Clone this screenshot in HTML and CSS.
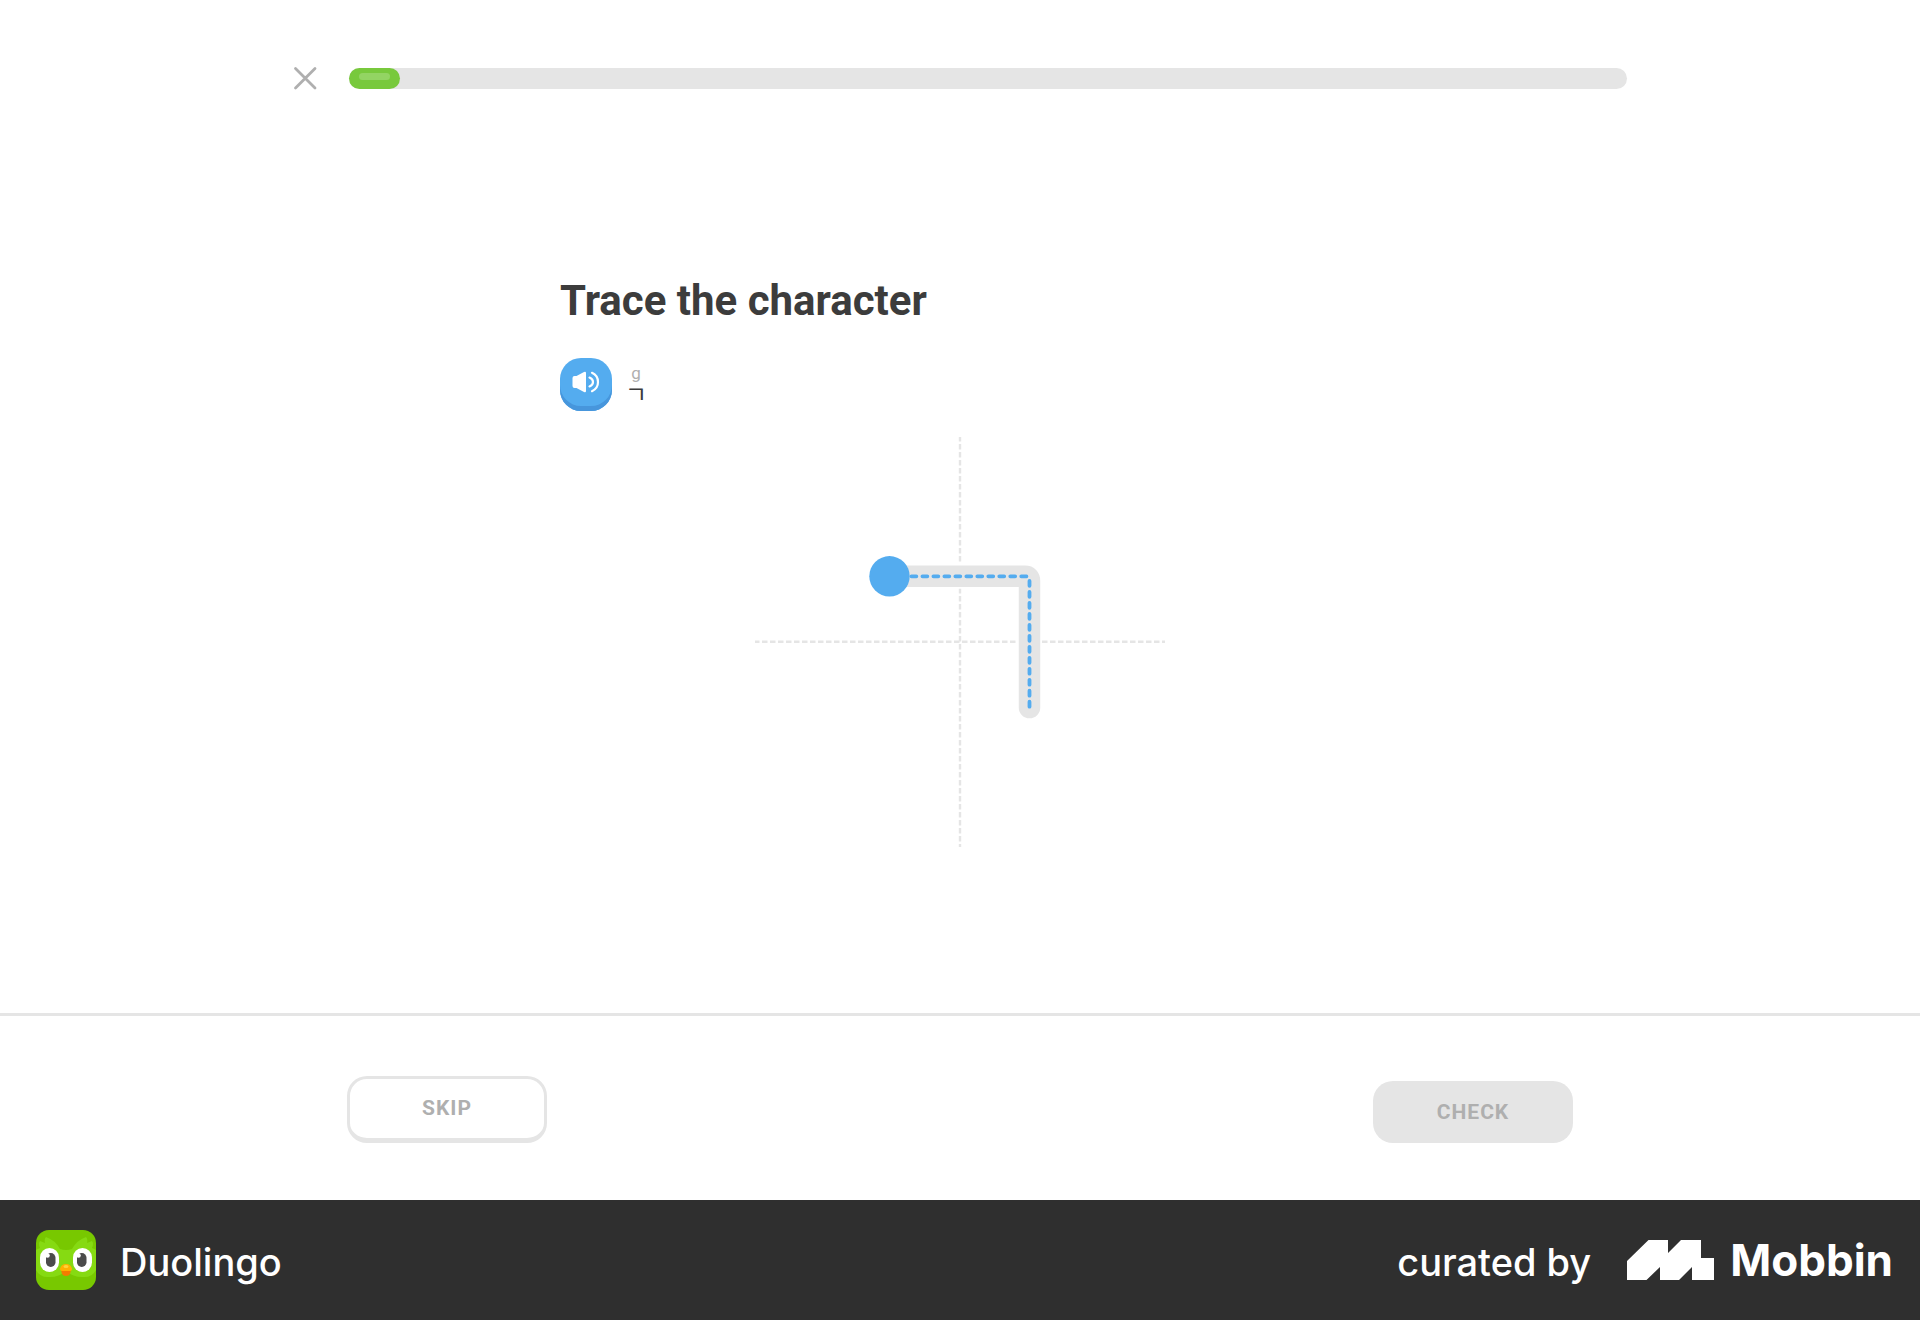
FILE: index.html
```html
<!DOCTYPE html>
<html lang="en">
<head>
<meta charset="utf-8">
<meta name="viewport" content="width=device-width, initial-scale=1">
<title>Trace the character</title>
<link rel="stylesheet" href="styles.css">
</head>
<body>
<header class="lesson-header">
  <button class="close" type="button" aria-label="Close">
    <svg viewBox="0 0 24 24" width="24" height="24" fill="none" stroke="#afafaf" stroke-width="2.8" stroke-linecap="round"><path d="M2.500 2.500 22 22M22 2.500 2.500 22"/></svg>
  </button>
  <div class="progress" role="progressbar" aria-label="Lesson progress" aria-valuemin="0" aria-valuemax="100" aria-valuenow="4">
    <div class="progress-fill" style="width:4%"><span class="progress-shine"></span></div>
  </div>
</header>

<main class="challenge">
  <h1 class="title">Trace the character</h1>
  <div class="prompt">
    <button class="speaker" type="button" aria-label="Play sound">
      <svg viewBox="0 0 28 24" width="28" height="24"><path fill="#fff" d="M2.500 6H4.500L12 2Q14 1.200 14 3V21Q14 22.800 12 22L4.500 18H2.500Q.5 18 .5 16V8Q.5 6 2.500 6Z"/><path fill="none" stroke="#fff" stroke-width="2.200" stroke-linecap="round" d="M17.500 7.600Q21 9 21 12T17.500 16.400M20 2.800Q26 5.600 26 12T20 21.200"/></svg>
    </button>
    <div class="hint">
      <span class="romaja">g</span>
      <span class="jamo" lang="ko">ㄱ</span>
    </div>
  </div>
  <svg class="trace" viewBox="0 0 410 410" width="410" height="410" fill="none" role="img" aria-label="Stroke to trace">
    <path d="M205 0V410M0 204.700H410" stroke="#e5e5e5" stroke-width="2.400" stroke-dasharray="5.500 2.500" stroke-dashoffset="1"/>
    <g stroke-linecap="round">
      <path d="M134.500 139.300H270Q274.500 139.300 274.500 144V270.600" stroke="#fff" stroke-width="25"/>
      <path d="M134.500 139.300H270Q274.500 139.300 274.500 144V270.600" stroke="#e5e5e5" stroke-width="21.500"/>
      <path d="M134.500 139.300H270Q274.500 139.300 274.500 144V270.600" stroke="#54acef" stroke-width="3.800" stroke-dasharray="4.900 6.080"/>
    </g>
    <circle cx="134.500" cy="139.300" r="20.200" fill="#54acef"/>
  </svg>
</main>

<footer class="actions">
  <div class="actions-inner">
    <button class="btn skip" type="button">SKIP</button>
    <button class="btn check" type="button" disabled>CHECK</button>
  </div>
</footer>

<div class="credit">
  <div class="app">
    <svg class="app-icon" viewBox="0 0 60 60" width="60" height="60" aria-hidden="true">
      <rect width="60" height="60" rx="13" fill="#78c800"/>
      <path fill="#86da12" d="M0 20 4 18Q2 13 4 11L9 13Q8 9 10 7Q19 10 24 19Q30 21 36 19Q41 10 50 7Q52 9 51 13L56 11Q58 13 56 18L60 20V40Q56 48 46 47Q37 47 30 41Q23 47 14 47Q4 48 0 40Z"/>
      <rect x="4" y="18" width="19" height="24" rx="9.500" fill="#fff"/>
      <rect x="37" y="18" width="19" height="24" rx="9.500" fill="#fff"/>
      <rect x="10" y="23" width="9.500" height="14" rx="4.700" fill="#4b4b4b"/>
      <rect x="41" y="23" width="9.500" height="14" rx="4.700" fill="#4b4b4b"/>
      <circle cx="11.500" cy="25.500" r="2.300" fill="#fff"/>
      <circle cx="42.500" cy="25.500" r="2.300" fill="#fff"/>
      <path fill="#f47b00" d="M25 40H35L34 44Q33 46 30 46T26 44Z"/>
      <path fill="#ffb100" d="M24 39Q25 34 30 34T36 39Q36 41 34 41H26Q24 41 24 39Z"/>
      <ellipse cx="30" cy="36.500" rx="2.500" ry="1.500" fill="#ffd43a"/>
    </svg>
    <span class="label">Duolingo</span>
  </div>
  <div class="curator">
    <span class="label">curated by</span>
    <svg class="mark" viewBox="0 0 87 40" width="87" height="40" aria-hidden="true"><path fill="#fff" d="M0 21 21.500 0H41V13L54 0H74V18H87V40H65V27L52 40H33V27L19.500 40H0Z"/></svg>
    <span class="brand">Mobbin</span>
  </div>
</div>
</body>
</html>
```
FILE: styles.css
```css
* { box-sizing: border-box; }

body {
  margin: 0;
  min-height: 100vh;
  display: flex;
  flex-direction: column;
  background: #fff;
  color: #3c3c3c;
  font-family: Roboto, "Noto Sans CJK KR", sans-serif;
}

button {
  font: inherit;
  border: 0;
  padding: 0;
  background: none;
  cursor: pointer;
}

svg { display: block; }

.lesson-header {
  width: 100%;
  max-width: 1334px;
  margin: 0 auto;
  padding-top: 66px;
  display: flex;
  align-items: center;
  gap: 32px;
}

.progress {
  flex: 1;
  height: 21px;
  border-radius: 11px;
  background: #e5e5e5;
}

.progress-fill {
  height: 100%;
  padding: 5px 10px 0;
  border-radius: 11px;
  background: #78c93c;
}

.progress-shine {
  display: block;
  height: 7px;
  border-radius: 4px;
  background: #93d463;
}

.challenge {
  flex: 1;
  width: 100%;
  max-width: 800px;
  margin: 0 auto;
  padding-top: 186px;
  display: flex;
  flex-direction: column;
}

.title {
  margin: 0;
  font-size: 42px;
  line-height: 50px;
  font-weight: 700;
}

.prompt {
  display: flex;
  align-items: center;
  gap: 13px;
  margin-top: 32px;
}

.speaker {
  width: 52px;
  height: 53px;
  display: flex;
  align-items: center;
  justify-content: center;
  padding-bottom: 5px;
  border-radius: 21px;
  background: #54acef;
  box-shadow: inset 0 -5px #4796dc;
}

.hint {
  display: flex;
  flex-direction: column;
  align-items: center;
}

.romaja {
  font-size: 17px;
  line-height: 20px;
  color: #afafaf;
}

.jamo {
  font-size: 24px;
  line-height: 24px;
}

.trace {
  align-self: center;
  margin: 26px 0;
}

.actions {
  border-top: 3px solid #e5e5e5;
  padding: 60px 24px 57px;
}

.actions-inner {
  max-width: 1226px;
  margin: 0 auto;
  display: flex;
  align-items: flex-end;
  justify-content: space-between;
}

.btn {
  width: 200px;
  height: 62px;
  border-radius: 20px;
  color: #afafaf;
  font-size: 21px;
  line-height: 24px;
  font-weight: 700;
  letter-spacing: 1px;
}

.skip {
  height: 67px;
  padding-bottom: 2px;
  border: 3px solid #e5e5e5;
  border-bottom-width: 5px;
}

.check { background: #e5e5e5; }

.credit {
  min-height: 120px;
  padding: 0 27px 0 36px;
  display: flex;
  align-items: center;
  justify-content: space-between;
  background: #2f2f2f;
  color: #fff;
  font-family: Inter, sans-serif;
  line-height: 48px;
}

.app,
.curator {
  display: flex;
  align-items: center;
}

.app { gap: 24px; }

.label {
  padding-top: 4px;
  font-size: 38px;
  font-weight: 500;
}

.mark { margin: 0 16px 0 36px; }

.brand {
  font-size: 44px;
  font-weight: 700;
}
```
